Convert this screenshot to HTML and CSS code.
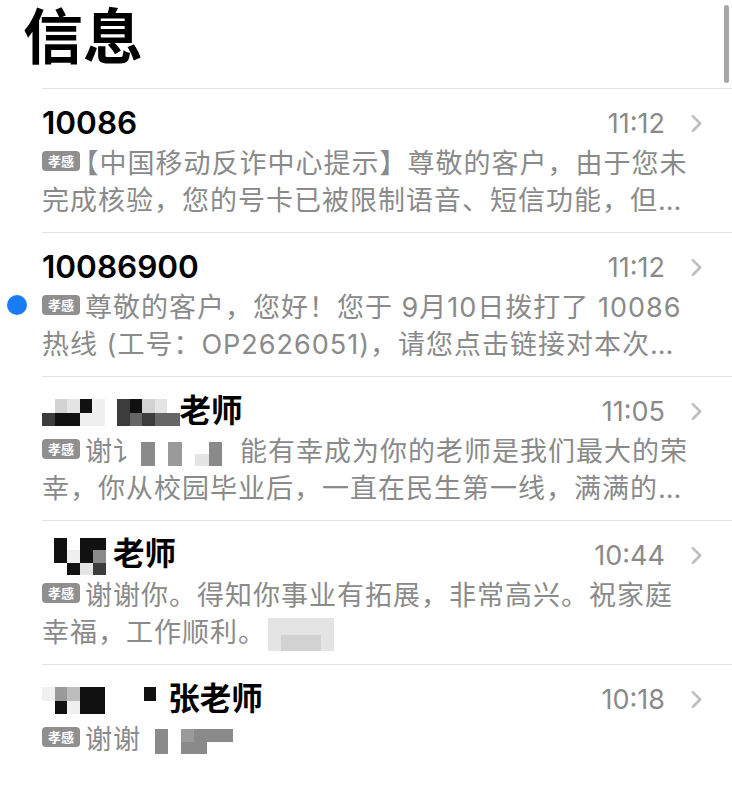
FILE: index.html
```html
<!DOCTYPE html>
<html>
<head lang="zh-CN">
    <meta charset="UTF-8">
    <title>信息</title>
    <link rel="stylesheet" href="styles.css">
</head>
<body>
<div class="screen">
    <div class="scrollbar"></div>
    <div class="header">
        <h1 class="title">信息</h1>
    </div>
    <ul class="threads">
        <li class="thread">
            <div class="mark"></div>
            <div class="thread-body">
                <div class="thread-top">
                    <span class="sender">10086</span>
                    <span class="time">11:12</span>
                    <svg class="chevron" viewBox="0 0 12 18"><polyline points="2.5,2 9.5,9 2.5,16"/></svg>
                </div>
                <div class="preview">
                    <div class="line"><span class="tag">孝感</span><span class="halt">【</span>中国移动反诈中心提示】尊敬的客户，由于您未</div>
                    <div class="line">完成核验，您的号卡已被限制语音、短信功能，但…</div>
                </div>
            </div>
        </li>
        <li class="thread">
            <div class="mark"><div class="unread"></div></div>
            <div class="thread-body">
                <div class="thread-top">
                    <span class="sender">10086900</span>
                    <span class="time">11:12</span>
                    <svg class="chevron" viewBox="0 0 12 18"><polyline points="2.5,2 9.5,9 2.5,16"/></svg>
                </div>
                <div class="preview">
                    <div class="line"><span class="tag">孝感</span>尊敬的客户，您好！您于 9月10日拨打了 10086</div>
                    <div class="line">热线 (工号：OP2626051)，请您点击链接对本次…</div>
                </div>
            </div>
        </li>
        <li class="thread">
            <div class="mark"></div>
            <div class="thread-body">
                <div class="thread-top">
                    <span class="sender"><span class="mosaic name-a"><i></i><i class="s8"></i><i class="s3"></i><i class="s9"></i><i class="s2"></i><i class="s9"></i><i class="s9"></i><i class="s1"></i><i class="s1"></i><i class="s1"></i><i></i><i></i><i class="s8"></i><i class="s8"></i><i class="s9"></i><i class="s7"></i><i class="s3"></i><i class="s8"></i><i class="s2"></i><i class="s7"></i><i></i><i class="s7"></i></span>老师</span>
                    <span class="time">11:05</span>
                    <svg class="chevron" viewBox="0 0 12 18"><polyline points="2.5,2 9.5,9 2.5,16"/></svg>
                </div>
                <div class="preview">
                    <div class="line"><span class="tag">孝感</span>谢讠<span class="mosaic text-a"><i class="s6"></i><i class="s6"></i><i></i><i></i><i class="s5"></i><i class="s5"></i><i></i><i></i><i></i><i class="s2"></i><i class="s6"></i><i class="s6"></i></span>能有幸成为你的老师是我们最大的荣</div>
                    <div class="line">幸，你从校园毕业后，一直在民生第一线，满满的…</div>
                </div>
            </div>
        </li>
        <li class="thread">
            <div class="mark"></div>
            <div class="thread-body">
                <div class="thread-top">
                    <span class="sender"><span class="mosaic name-b"><i class="s9"></i><i class="s9"></i><i></i><i></i><i class="s1"></i><i class="s9"></i><i class="s9"></i><i class="s9"></i><i class="s2"></i><i class="s9"></i><i class="s6"></i><i class="s8"></i></span>老师</span>
                    <span class="time">10:44</span>
                    <svg class="chevron" viewBox="0 0 12 18"><polyline points="2.5,2 9.5,9 2.5,16"/></svg>
                </div>
                <div class="preview">
                    <div class="line"><span class="tag">孝感</span>谢谢你。得知你事业有拓展，非常高兴。祝家庭</div>
                    <div class="line">幸福，工作顺利。<span class="mosaic text-b"><i class="s2"></i><i class="s2"></i><i class="s2"></i><i class="s3"></i><i class="s2"></i><i class="s3"></i><i class="s2"></i><i class="s3"></i><i class="s2"></i><i class="s2"></i></span></div>
                </div>
            </div>
        </li>
        <li class="thread">
            <div class="mark"></div>
            <div class="thread-body">
                <div class="thread-top">
                    <span class="sender"><span class="mosaic name-c"><i class="s1"></i><i></i><i class="s5"></i><i class="s9"></i><i class="s4"></i><i class="s1"></i><i class="s9"></i><i class="s9"></i><i class="s9"></i><i class="s9"></i><i></i><i></i><i></i><i></i><i></i><i></i><i class="s9"></i><i></i></span>张老师</span>
                    <span class="time">10:18</span>
                    <svg class="chevron" viewBox="0 0 12 18"><polyline points="2.5,2 9.5,9 2.5,16"/></svg>
                </div>
                <div class="preview">
                    <div class="line"><span class="tag">孝感</span>谢谢<span class="mosaic text-c"><i class="s6"></i><i class="s6"></i><i></i><i></i><i class="s5"></i><i class="s6"></i><i class="s6"></i><i class="s6"></i><i class="s6"></i><i></i><i class="s6"></i><i></i></span></div>
                </div>
            </div>
        </li>
    </ul>
</div>
</body>
</html>
```

FILE: styles.css
```css
*{ box-sizing: border-box;}
body,ul,h1{ margin: 0; padding: 0;}
body{ background: #fff; font-family: "Inter", "Noto Sans CJK SC", sans-serif;}

.screen{ position: relative; width: 732px; height: 800px; overflow: hidden;}
.scrollbar{ position: absolute; top: 5px; right: 3px; width: 5px; height: 78px; border-radius: 3px; background: #a6a6a6;}

.header{ height: 88px; padding-left: 23px;}
.title{ font-size: 60px; font-weight: 700; line-height: 74px; color: #000;}

.threads{ list-style: none;}
.thread{ display: flex;}
.mark{ width: 42px; flex: none;}
.unread{ width: 20px; height: 20px; margin: 63px 0 0 7px; border-radius: 50%; background: #1a7cf5;}
.thread-body{ flex: 1; height: 144px; padding: 19px 29px 12px 0; border-top: 1px solid #e2e2e2;}

.thread-top{ display: flex; align-items: center; height: 30px;}
.sender{ flex: 1; font-size: 31.5px; font-weight: 600; line-height: 30px; color: #000; white-space: nowrap;}
.time{ font-size: 27px; color: #8a8a8a;}
.chevron{ width: 13px; height: 19px; margin-left: 25px;}
.chevron polyline{ fill: none; stroke: #bfbfc2; stroke-width: 2.6; stroke-linecap: round; stroke-linejoin: round;}

.preview{ margin-top: 7px; font-size: 27px; line-height: 37px; letter-spacing: 1px; color: #8a8a8a; white-space: nowrap;}
.halt{ font-feature-settings: "halt";}
.tag{ display: inline-block; width: 38px; height: 20px; margin-right: 5px; border-radius: 4px; background: #8f8f8f; color: #fff; font-size: 13px; font-weight: 700; line-height: 20px; letter-spacing: 0; text-align: center; vertical-align: 7px;}

/* 打码的马赛克块 */
.mosaic{ display: inline-grid; grid-auto-flow: column; vertical-align: middle;}
.mosaic i{ display: block; background: #fff;}
.mosaic .s1{ background: #f0f0f0;}
.mosaic .s2{ background: #e4e4e4;}
.mosaic .s3{ background: #d2d2d2;}
.mosaic .s4{ background: #bdbdbd;}
.mosaic .s5{ background: #9a9a9a;}
.mosaic .s6{ background: #8a8a8a;}
.mosaic .s7{ background: #666;}
.mosaic .s8{ background: #3c3c3c;}
.mosaic .s9{ background: #111;}

.name-a{ grid-template-rows: repeat(2, 13.5px); grid-auto-columns: 12.5px;}
.name-b{ grid-template-rows: repeat(3, 12.5px); grid-auto-columns: 13px; margin: -4px 7px -4px 12px;}
.name-c{ grid-template-rows: repeat(2, 13.5px); grid-auto-columns: 12.7px; margin-right: 12px;}
.text-a{ grid-template-rows: repeat(2, 12px); grid-auto-columns: 13.5px; margin-right: 18px;}
.text-b{ grid-template-rows: repeat(2, 16.5px); grid-auto-columns: 13.2px; margin-left: 2px;}
.text-c{ grid-template-rows: repeat(2, 12.5px); grid-auto-columns: 13px; margin-left: 14px;}
```
